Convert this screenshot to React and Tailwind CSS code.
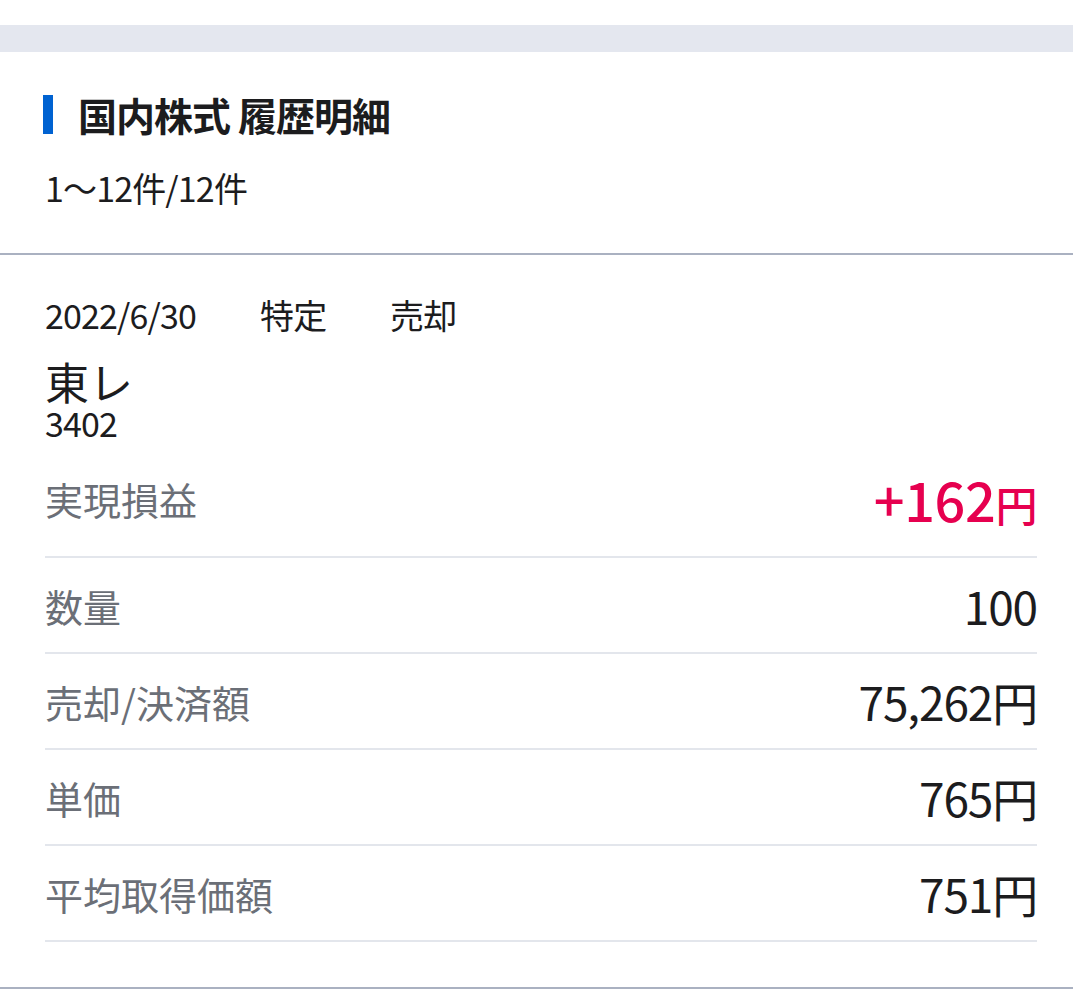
const rows = [
  { label: "数量", value: "100" },
  { label: "売却/決済額", value: "75,262円" },
  { label: "単価", value: "765円" },
  { label: "平均取得価額", value: "751円" },
];

export default function App() {
  return (
    <div className="min-h-[999px] bg-white text-[#1c1c1e] font-['Noto_Sans_CJK_JP','Noto_Sans',sans-serif]">
      <div className="h-[25px] bg-white" />
      <div className="h-[27px] bg-[#e4e7ef]" />

      <div className="pl-[43px] pt-[42px] h-[203px] border-b-2 border-[#aab1c1]">
        <div className="flex items-center gap-[25px] h-[40px]">
          <span className="w-[10px] h-[39px] bg-[#0062d1]" />
          <h2 className="text-[39px] font-bold leading-none tracking-tight">国内株式 履歴明細</h2>
        </div>
        <p className="mt-[37px] pl-[2px] text-[34px] leading-none tracking-tight">1〜12件/12件</p>
      </div>

      <div className="pl-[45px] pr-[36px] pt-[40px] pb-[45px] border-b-2 border-[#aab1c1]">
        <div className="flex text-[34px] leading-[40px] tracking-tight">
          <span className="w-[215px]">2022/6/30</span>
          <span className="w-[130px]">特定</span>
          <span>売却</span>
        </div>
        <p className="text-[44px] leading-[44px] mt-[24px]">東レ</p>
        <p className="text-[34px] leading-[34px] mt-[3px] tracking-tight">3402</p>

        <div className="flex items-center justify-between h-[118px] border-b-2 border-[#e3e6ec]">
          <span className="text-[38px] text-[#6b6f77]">実現損益</span>
          <span className="flex items-baseline text-[#e6004f] font-medium tracking-tight">
            <span className="text-[54px]">+162</span>
            <span className="text-[42px]">円</span>
          </span>
        </div>

        {rows.map((row) => (
          <div
            key={row.label}
            className="flex items-center justify-between h-[96px] border-b-2 border-[#e3e6ec]"
          >
            <span className="text-[38px] text-[#6b6f77]">{row.label}</span>
            <span className="text-[46px] tracking-tight">{row.value}</span>
          </div>
        ))}
      </div>
    </div>
  );
}
